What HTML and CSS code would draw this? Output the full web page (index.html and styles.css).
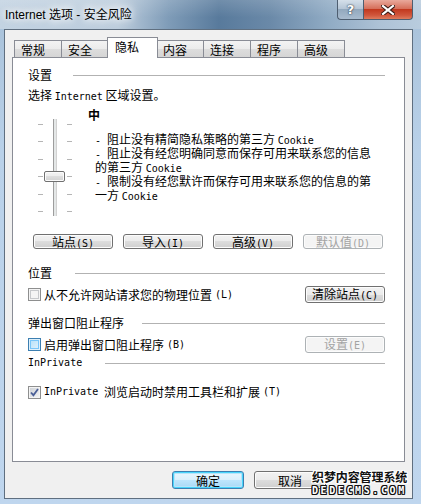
FILE: index.html
```html
<!DOCTYPE html>
<html lang="zh">
<head>
    <meta charset="UTF-8">
    <title>Internet 选项 - 安全风险</title>
    <link rel="stylesheet" href="styles.css">
</head>
<body>
    <div class="window">
        <div class="titlebar">
            <div class="title">Internet 选项 - 安全风险</div>
            <div class="caption-buttons">
                <div class="cap-btn help">?</div>
                <div class="cap-btn close">
                    <svg width="14" height="10" viewBox="0 0 14 10">
                        <path d="M2 1 L12 9 M12 1 L2 9" stroke="#3a1a14" stroke-width="4.2" stroke-linecap="square"/>
                        <path d="M2 1 L12 9 M12 1 L2 9" stroke="#fff" stroke-width="2.2" stroke-linecap="square"/>
                    </svg>
                </div>
            </div>
        </div>

        <div class="client">
            <div class="tabs">
                <div class="tab">常规</div>
                <div class="tab">安全</div>
                <div class="tab active">隐私</div>
                <div class="tab">内容</div>
                <div class="tab">连接</div>
                <div class="tab">程序</div>
                <div class="tab">高级</div>
            </div>

            <div class="panel">
                <div class="group-title">设置</div>
                <div class="hint">选择 <span class="en">Internet</span> 区域设置。</div>

                <div class="privacy">
                    <div class="slider">
                        <div class="ticks"><i></i><i></i><i></i><i></i><i></i><i></i></div>
                        <div class="track"></div>
                        <div class="ticks"><i></i><i></i><i></i><i></i><i></i><i></i></div>
                        <div class="thumb"></div>
                    </div>
                    <div class="level">
                        <div class="level-name">中</div>
                        <div class="level-desc">
                            <div><span class="en">- </span>阻止没有精简隐私策略的第三方 <span class="en">Cookie</span></div>
                            <div><span class="en">- </span>阻止没有经您明确同意而保存可用来联系您的信息的第三方 <span class="en">Cookie</span></div>
                            <div><span class="en">- </span>限制没有经您默许而保存可用来联系您的信息的第一方 <span class="en">Cookie</span></div>
                        </div>
                    </div>
                </div>

                <div class="btn-row">
                    <button class="btn">站点<span class="en">(S)</span></button>
                    <button class="btn">导入<span class="en">(I)</span></button>
                    <button class="btn">高级<span class="en">(V)</span></button>
                    <button class="btn" disabled>默认值<span class="en">(D)</span></button>
                </div>

                <div class="group-title gt-location">位置</div>
                <div class="option-row">
                    <label class="check-label"><span class="check"></span>从不允许网站请求您的物理位置<span class="en">(L)</span></label>
                    <button class="btn">清除站点<span class="en">(C)</span></button>
                </div>

                <div class="group-title gt-popup">弹出窗口阻止程序</div>
                <div class="option-row">
                    <label class="check-label"><span class="check hover"></span>启用弹出窗口阻止程序<span class="en">(B)</span></label>
                    <button class="btn" disabled>设置<span class="en">(E)</span></button>
                </div>

                <div class="group-title gt-private"><span class="en">InPrivate</span></div>
                <div class="option-row last">
                    <label class="check-label">
                        <span class="check checked">
                            <svg width="9" height="9" viewBox="0 0 9 9"><path d="M1 4.5 L3.4 7.2 L8 1" fill="none" stroke="#4a5f97" stroke-width="1.8"/></svg>
                        </span>
                        <span class="en">InPrivate</span>&nbsp;浏览启动时禁用工具栏和扩展<span class="en">(T)</span>
                    </label>
                </div>
            </div>

            <div class="footer">
                <button class="btn btn-default">确定</button>
                <button class="btn">取消</button>
            </div>
        </div>

        <div class="watermark">
            <div class="wm-cn">织梦内容管理系统</div>
            <div class="wm-en">DEDECMS.COM</div>
        </div>
    </div>
</body>
</html>
```

FILE: styles.css
```css
* {
    box-sizing: border-box;
}

body {
    margin: 0;
    width: 421px;
    height: 504px;
    overflow: hidden;
    font-family: "Noto Sans CJK SC", sans-serif;
    font-size: 12px;
    line-height: 14px;
    color: #000;
}

.en {
    font-family: "DejaVu Sans Mono", "Liberation Mono", monospace;
    font-size: 10px;
}

.window {
    position: relative;
    width: 421px;
    height: 504px;
    display: flex;
    flex-direction: column;
    background: linear-gradient(to bottom, #a7c0d8, #b9d1e9 30%, #bfd6ee);
}

/* title bar */
.titlebar {
    height: 29px;
    display: flex;
    justify-content: space-between;
    padding: 0 8px 0 5px;
    background:
        linear-gradient(to bottom, rgba(255,255,255,0.15), rgba(255,255,255,0) 60%),
        linear-gradient(to right, #c3d3e2 0, #bccddd 28%, #7f9cb8 40%, #587a9c 52%, #6a89a8 64%, #90abc4 78%, #adc2d6 90%, #b9ccde 100%);
}

.title {
    font-family: "Liberation Sans", "Noto Sans CJK SC", sans-serif;
    font-size: 12px;
    line-height: 14px;
    padding-top: 8px;
    text-shadow: 0 0 6px #fff, 0 0 10px #fff, 0 0 14px rgba(255,255,255,0.8);
}

.caption-buttons {
    display: flex;
    height: 20px;
}

.cap-btn {
    height: 20px;
    display: flex;
    align-items: center;
    justify-content: center;
    border: 1px solid #4e5e70;
    border-top: none;
}

.help {
    width: 26px;
    border-radius: 0 0 0 4px;
    border-right: none;
    background: linear-gradient(to bottom, #d5e0ea, #b6c6d6 45%, #93a9be 50%, #a9bccf);
    color: #fff;
    font-family: "DejaVu Sans", sans-serif;
    font-weight: bold;
    font-size: 13px;
    text-shadow: 0 0 2px #2a3644, 0 0 1px #2a3644;
}

.close {
    width: 50px;
    border-radius: 0 0 4px 0;
    background: linear-gradient(to bottom, #e9a99b, #d6705b 45%, #c2391f 50%, #d0563c 80%, #de7c5e);
}

/* client area */
.client {
    flex: 1;
    margin: 0 8px 5px 4px;
    border: 1px solid #5f6f80;
    background: #f0f0f0;
    display: flex;
    flex-direction: column;
}

.tabs {
    display: flex;
    align-items: flex-end;
    height: 20px;
    margin: 7px 0 0 9px;
}

.tab {
    width: 48px;
    height: 17px;
    margin-right: -1px;
    padding: 1px 0 0 6px;
    border: 1px solid #898c95;
    border-bottom: none;
    background: linear-gradient(to bottom, #f3f3f3, #ebebeb 50%, #dddddd 50%, #d5d5d5);
    line-height: 15px;
}

.tab.active {
    position: relative;
    z-index: 1;
    width: 51px;
    height: 21px;
    margin: 0 -2px -1px -1px;
    padding: 1px 0 0 7px;
    background: #fff;
}

.panel {
    height: 405px;
    margin: 0 7px;
    padding: 0 19px 0 15px;
    border: 1px solid #898c95;
    background: #fff;
}

.group-title {
    display: flex;
    align-items: center;
    gap: 21px;
    margin-top: 10px;
}

.group-title::after {
    content: "";
    flex: 1;
    height: 1px;
    background: #b2b2b2;
}

.gt-location {
    margin-top: 17px;
    gap: 23px;
}

.gt-popup {
    margin-top: 13px;
    gap: 18px;
}

.gt-private {
    margin-top: 4px;
    gap: 23px;
    height: 12px;
}

.hint {
    margin-top: 6px;
}

/* privacy slider */
.privacy {
    display: flex;
    height: 111px;
    margin-top: 3px;
}

.slider {
    position: relative;
    width: 34px;
    height: 97px;
    margin: 12px 0 0 10px;
    display: flex;
    justify-content: space-between;
}

.ticks {
    width: 5px;
    display: flex;
    flex-direction: column;
    justify-content: space-between;
    padding: 5px 0 4px;
}

.ticks i {
    display: block;
    height: 1px;
    background: #b5b5b5;
}

.track {
    width: 4px;
    background: #e4e7e7;
    border-left: 1px solid #9d9d9d;
    border-right: 1px solid #d2d2d2;
}

.thumb {
    position: absolute;
    left: 6px;
    top: 52px;
    width: 21px;
    height: 11px;
    border: 1px solid #707070;
    border-radius: 2px;
    background: linear-gradient(to bottom, #f4f4f4, #ececec 50%, #dedede 50%, #d2d2d2);
    box-shadow: inset 0 0 0 1px #fbfbfb;
}

.level {
    margin-left: 16px;
}

.level-name {
    font-weight: bold;
    margin-top: 1px;
}

.level-desc {
    width: 287px;
    margin-top: 11px;
    padding-left: 7px;
    line-height: 12px;
}

/* buttons */
.btn-row {
    display: flex;
    gap: 10px;
    margin-top: 16px;
    padding-left: 5px;
}

.btn {
    width: 80px;
    height: 15px;
    padding: 0;
    font-family: inherit;
    font-size: 12px;
    line-height: 13px;
    color: #000;
    border: 1px solid #707070;
    border-radius: 3px;
    background: linear-gradient(to bottom, #f2f2f2, #ebebeb 50%, #dddddd 50%, #cfcfcf);
    box-shadow: inset 0 0 0 1px #fcfcfc;
}

.btn:disabled {
    color: #a3a3a3;
    border-color: #adb2b5;
    background: #f4f4f4;
}

.option-row {
    display: flex;
    align-items: center;
    justify-content: space-between;
    height: 17px;
    margin-top: 6px;
}

.option-row .btn {
    height: 17px;
}

.option-row.last {
    margin-top: 16px;
    height: 14px;
}

.check-label {
    display: flex;
    align-items: center;
    gap: 3px;
}

.check {
    width: 13px;
    height: 13px;
    display: flex;
    align-items: center;
    justify-content: center;
    border: 1px solid #8e8f8f;
    background: #f4f4f4;
    box-shadow: inset 0 0 0 1px #f4f4f4, inset 0 0 0 2px #c6c8cb;
}

.check.hover {
    border-color: #3c7fb1;
    background: linear-gradient(to bottom right, #b1dff9, #e6f4fc);
    box-shadow: inset 0 0 0 1px #def0fb, inset 0 0 0 2px #79c6f9;
}

.check.checked {
    background: linear-gradient(to bottom right, #cbcfd5, #f6f6f6);
    box-shadow: inset 0 0 0 1px #f4f4f4;
}

/* footer */
.footer {
    display: flex;
    gap: 10px;
    margin-top: 9px;
    padding-left: 167px;
}

.footer .btn {
    width: 72px;
    height: 18px;
}

.btn-default {
    border-color: #3c7fb1;
    box-shadow: inset 0 0 0 1px #48d5fb, inset 0 0 0 2px #b8e4fa;
    background: linear-gradient(to bottom, #eaf6fd, #d9f0fc 50%, #bee6fd 50%, #a7d9f5);
}

/* watermark overlay */
.watermark {
    position: absolute;
    right: 11px;
    bottom: 8px;
    width: 98px;
}

.wm-cn {
    font-weight: bold;
    font-size: 12px;
    line-height: 14px;
    letter-spacing: -0.1px;
    color: #111;
    text-shadow: 1px 0 #fff, -1px 0 #fff, 0 1px #fff, 0 -1px #fff, 1px 1px #fff, -1px -1px #fff, 1px -1px #fff, -1px 1px #fff;
}

.wm-en {
    margin-top: 2px;
    font-family: "DejaVu Sans Mono", monospace;
    font-weight: bold;
    font-size: 10px;
    line-height: 10px;
    letter-spacing: 2.6px;
    color: #fff;
    text-shadow: 1px 0 #111, -1px 0 #111, 0 1px #111, 0 -1px #111, 1px 1px #111, -1px -1px #111, 1px -1px #111, -1px 1px #111;
}
```
